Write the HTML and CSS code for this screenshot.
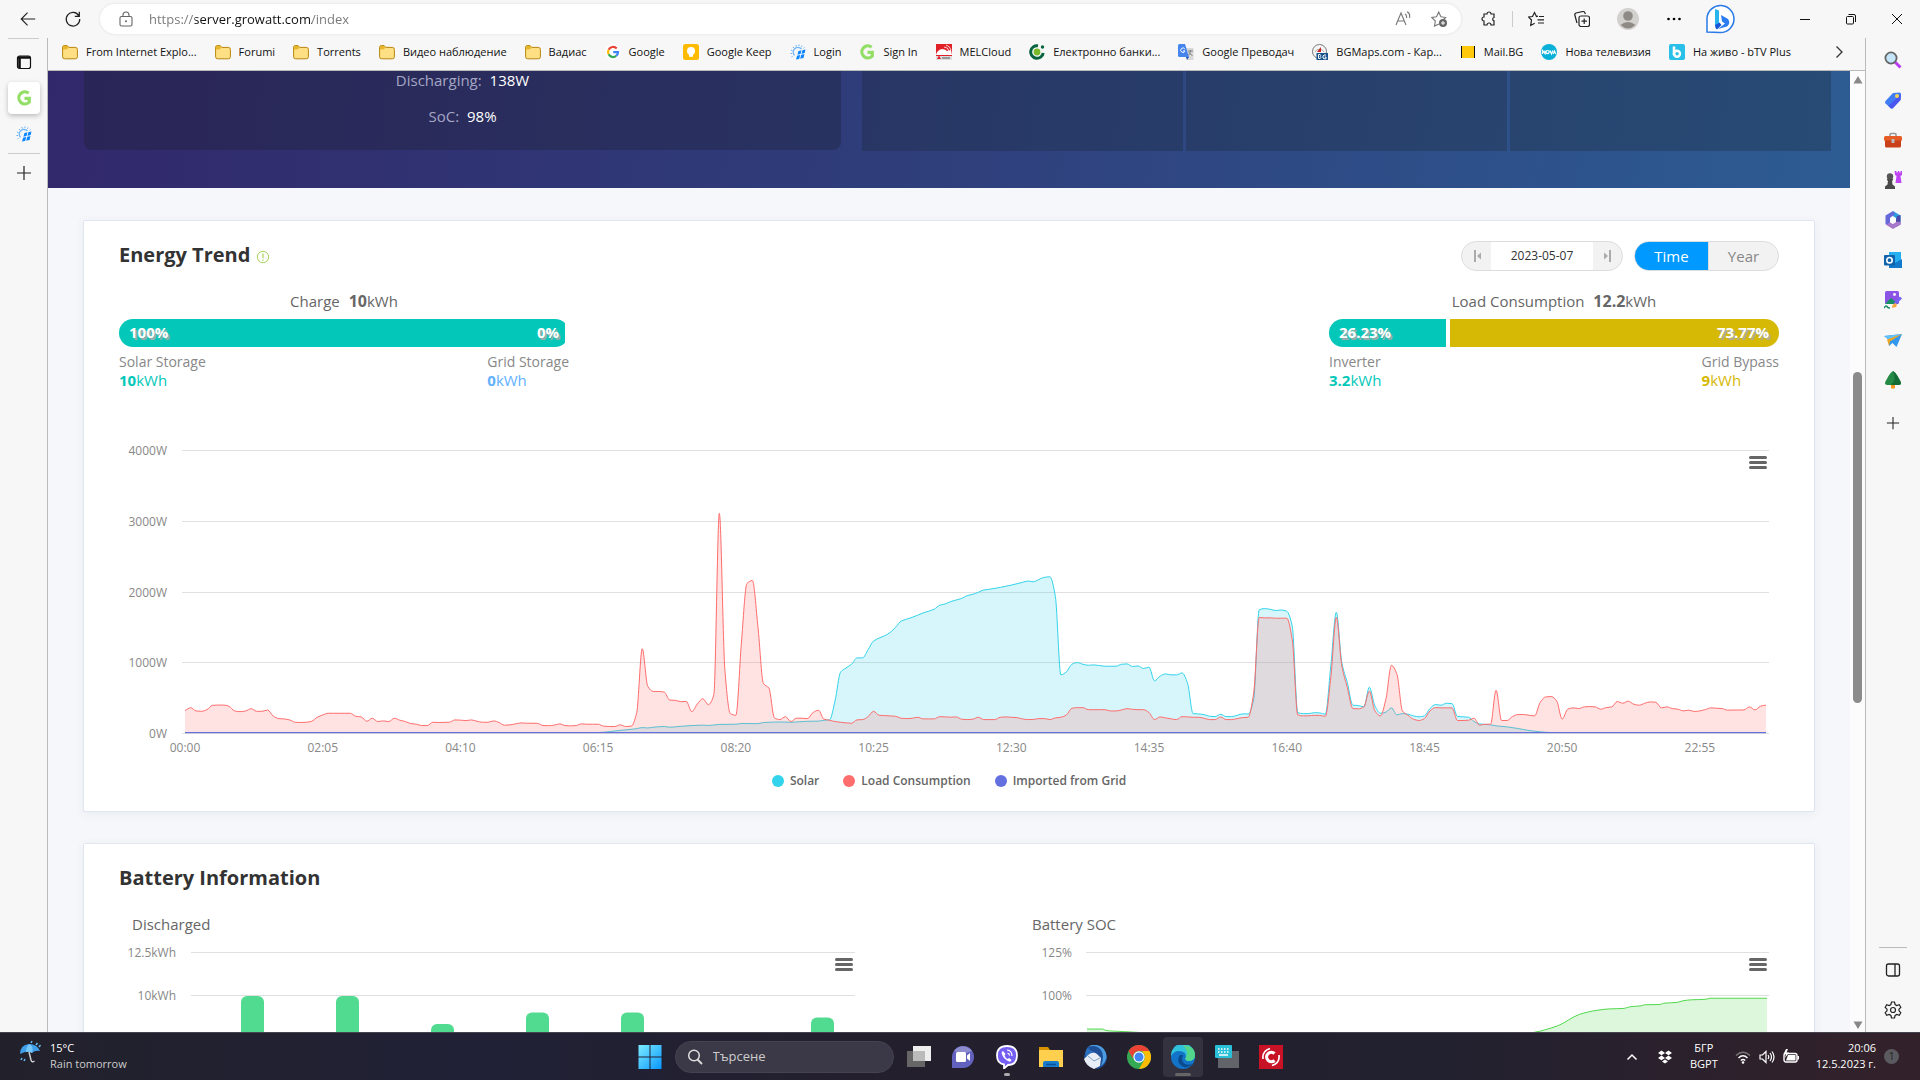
FILE: index.html
```html
<!DOCTYPE html>
<html lang="en">
<head>
    <meta charset="UTF-8">
    <meta name="viewport" content="width=device-width, initial-scale=1.0">
    <title>Growatt Energy Trend</title>
    <link rel="stylesheet" href="styles.css">
</head>
<body>
    <!-- Shared icons -->
    <svg class="sprite" aria-hidden="true">
        <symbol id="folder" viewBox="0 0 16 16">
            <path d="M.6 3.2q0-1.6 1.6-1.6h3l1.6 1.8h6.6q2 0 2 2v7.400q0 2-2 2H2.600q-2 0-2-2z" fill="#ffdf84" stroke="#b8860b"/>
            <path d="M1 5.500V3.200Q1 2 2.200 2H5l1.500 1.500L5 5.200z" fill="#e8b62c"/>
        </symbol>
        <symbol id="growatt" viewBox="0 0 16 16">
            <path d="M12.600 3.200A6 6 0 1 0 13.300 12V8.300H8.500" fill="none" stroke="#93de66" stroke-width="3.200"/>
        </symbol>
        <symbol id="panel" viewBox="0 0 16 16">
            <path d="M8.500 7l7-1.500L13.500 14l-7.500 1.500z" fill="#0a84ff"/>
            <path d="M9.500 15.500L12 6M7 11.200l8-1.700" stroke="#fff" stroke-width=".9"/>
            <path d="M4.500 11.500A4.500 4.500 0 0 1 11.500 5" fill="none" stroke="#6fb6fa" stroke-width="1.300"/>
            <path d="M1.500 13l1-.5M.5 9.500H2M1 6l1.500.7M3 3l1 1.200M5.800 1l.6 1.500M9 .5V2M12 1.500l-.7 1.300M14.500 3.500l-1 .8" stroke="#64aef5"/>
        </symbol>
        <symbol id="plus" viewBox="0 0 16 16">
            <path d="M8 1v14M1 8h14" stroke="#222" stroke-width="1.200"/>
        </symbol>
    </svg>

    <!-- Browser toolbar -->
    <header class="toolbar">
        <button class="nav-button" aria-label="Back"><svg viewBox="0 0 20 20"><path d="M18 10H2.500M9.500 3L2.500 10l7 7" fill="none" stroke="#222" stroke-width="1.300"/></svg></button>
        <button class="nav-button" aria-label="Refresh"><svg viewBox="0 0 20 20"><path d="M16.500 6.500A7.500 7.500 0 1 0 17.500 10M17 2v5h-5" fill="none" stroke="#222" stroke-width="1.400"/></svg></button>
        <div class="address-bar">
            <svg class="lock" viewBox="0 0 16 16"><rect x="2" y="5.500" width="12" height="9.500" rx="1.500" fill="none" stroke="#666" stroke-width="1.100"/><path d="M5 5.500V4a3 3 0 0 1 6 0v1.500" fill="none" stroke="#666" stroke-width="1.100"/><circle cx="8" cy="10.200" r="1" fill="#666"/></svg>
            <input class="address-input" type="text" aria-label="Address" value="https://server.growatt.com/index">
            <svg class="address-icon" viewBox="0 0 16 16"><path d="M1 14L6 2l5 12M2.500 10h7M10 3q2 1 1.500 4M12 .8q3.500 1.500 2.500 6" fill="none" stroke="#777" stroke-width="1.100"/></svg>
            <svg class="address-icon" viewBox="0 0 16 16"><path d="M8 13l-4.500 2 .8-5L.8 6.500l4.700-.8L7.700 1l2.200 4.700 4.700.8-2 2" fill="none" stroke="#777" stroke-width="1.100"/><circle cx="12" cy="12" r="4" fill="#666"/><path d="M12 10v4M10 12h4" stroke="#fff"/></svg>
        </div>
        <button class="tool-button" aria-label="Extensions"><svg viewBox="0 0 16 16"><path d="M3 3h3a2 2 0 0 1 4 0h3v3.500a1.700 1.700 0 0 0 0 3.300V14h-3a2 2 0 0 0-4 0H3v-4a2 2 0 0 1 0-4z" fill="none" stroke="#222" stroke-width="1.200"/></svg></button>
        <span class="tool-divider"></span>
        <button class="tool-button" aria-label="Favorites"><svg viewBox="0 0 16 16"><path d="M10 5.200L8.500 5.500 6.500 1.500 4.500 5.500.5 6l3 3-.8 5.500 4-2.200M11 5.500h5M9.500 8.800H16M10 12h6" fill="none" stroke="#222" stroke-width="1.200"/></svg></button>
        <button class="tool-button" aria-label="Collections"><svg viewBox="0 0 16 16"><rect x="5" y="5" width="10.500" height="10.500" rx="2" fill="none" stroke="#222" stroke-width="1.200"/><path d="M10.200 7.500v5.500M7.500 10.200H13M3 12L.8 4Q.5 2.500 2 2l7-1.500q1.500-.2 2 1.500l.4 1" fill="none" stroke="#222" stroke-width="1.200"/></svg></button>
        <button class="tool-button profile" aria-label="Profile"><svg viewBox="0 0 22 22"><circle cx="11" cy="11" r="11" fill="#d3d1ce"/><circle cx="11" cy="8" r="4.800" fill="#8e8b87"/><path d="M3.500 17q7.500-6 15 0-7.500 7-15 0" fill="#8e8b87"/></svg></button>
        <button class="tool-button" aria-label="Settings and more"><svg viewBox="0 0 16 16"><circle cx="2.500" cy="8" r="1.300"/><circle cx="8" cy="8" r="1.300"/><circle cx="13.500" cy="8" r="1.300"/></svg></button>
        <button class="tool-button bing" aria-label="Bing"><svg viewBox="0 0 32 32"><path d="M3 29V15a13.500 13.500 0 1 1 13 14.500z" fill="#fff" stroke="#2979e8" stroke-width="1.500"/><path d="M11 6l4 1.500v13l-4 3z" fill="#28b4ec"/><path d="M11 22l4.500-2.500 2 2.500-4.500 4.500q-2-1-2-4.500" fill="#1756d8"/><path d="M17 12l7 4q3 4-1 7.500L14 26l7-5.500-3-2z" fill="#2a7cf0"/></svg></button>
        <div class="window-buttons">
            <button aria-label="Minimize"><svg viewBox="0 0 12 12"><path d="M1 6.500h10" stroke="#111"/></svg></button>
            <button aria-label="Restore"><svg viewBox="0 0 12 12"><rect x="1.500" y="3.500" width="7" height="7.500" rx="1" fill="none" stroke="#111"/><path d="M3.500 1.500H9q1.500 0 1.500 1.500v6" fill="none" stroke="#111"/></svg></button>
            <button aria-label="Close"><svg viewBox="0 0 12 12"><path d="M1 1l10 10M11 1L1 11" stroke="#111"/></svg></button>
        </div>
    </header>

    <div class="workspace">
        <!-- Vertical tabs -->
        <nav class="tab-rail">
            <button aria-label="Tab actions"><svg viewBox="0 0 16 16"><rect x="1.500" y="2" width="13" height="12.500" rx="2" fill="none" stroke="#111" stroke-width="1.200"/><path d="M2 3.500h12M3.500 3v11" stroke="#111" stroke-width="2.600"/></svg></button>
            <button class="active" aria-label="Growatt"><svg><use href="#growatt"/></svg></button>
            <button aria-label="Login"><svg><use href="#panel"/></svg></button>
            <hr>
            <button aria-label="New tab"><svg><use href="#plus"/></svg></button>
        </nav>

        <div class="browser">
            <nav class="bookmarks">
                <a href="#"><svg><use href="#folder"/></svg>From Internet Explo...</a>
                <a href="#"><svg><use href="#folder"/></svg>Forumi</a>
                <a href="#"><svg><use href="#folder"/></svg>Torrents</a>
                <a href="#"><svg><use href="#folder"/></svg>Видео наблюдение</a>
                <a href="#"><svg><use href="#folder"/></svg>Вадиас</a>
                <a href="#"><svg viewBox="0 0 16 16"><circle cx="8" cy="8" r="8" fill="#fff"/><g fill="none" stroke-width="2.200"><path d="M11.700 4.500A5 5 0 0 0 3.600 5.700" stroke="#ea4335"/><path d="M3.600 5.700a5 5 0 0 0 0 4.600" stroke="#fbbc05"/><path d="M3.600 10.300a5 5 0 0 0 7.600 1.600" stroke="#34a853"/><path d="M11.200 11.900A5 5 0 0 0 13 8.200H8.200" stroke="#4285f4"/></g></svg>Google</a>
                <a href="#"><svg viewBox="0 0 16 16"><rect width="16" height="16" rx="2.500" fill="#fb0"/><circle cx="8" cy="7" r="4" fill="#fff"/><path d="M6 9h4v3.800H6z" fill="#fff"/></svg>Google Keep</a>
                <a href="#"><svg><use href="#panel"/></svg>Login</a>
                <a href="#"><svg><use href="#growatt"/></svg>Sign In</a>
                <a href="#"><svg viewBox="0 0 16 16"><path d="M0 0h16v16H0z" fill="#e01f26"/><path d="M0 11q1-5 6-6 3 0 5 2l4-1 1 5z" fill="#fff"/><path d="M0 12h16v4H0z" fill="#ddd"/><path d="M1 15l2-3.500L5 15z" fill="#e01f26"/><path d="M6 14h8" stroke="#999" stroke-width="2"/><path d="M8 3q4 0 5 4M10 1q4 1 5 5" fill="none" stroke="#fff" stroke-width=".8"/></svg>MELCloud</a>
                <a href="#"><svg viewBox="0 0 16 16"><path d="M9 1.800A6.300 6.300 0 1 0 14.200 9" fill="none" stroke="#07643e" stroke-width="3"/><circle cx="8" cy="8" r="3.400" fill="#7ab929"/><circle cx="13.500" cy="3" r="1.700" fill="#07643e"/></svg>Електронно банки...</a>
                <a href="#"><svg viewBox="0 0 16 16"><path d="M7 4h8.500v12H9z" fill="#d7d9db"/><path d="M1.500 0H7l4 13H1.500Q0 13 0 11.500v-10Q0 0 1.500 0" fill="#4684ee"/><path d="M6.800 5A2.200 2.200 0 1 0 7 7H5" fill="none" stroke="#fff"/><path d="M8 13h3l-2 3" fill="#2554b5"/><path d="M10 7h5M12.500 6v1q0 3-2.500 4.500M11 8.500q1 2 3.500 3" fill="none" stroke="#777" stroke-width=".9"/></svg>Google Преводач</a>
                <a href="#"><svg viewBox="0 0 16 16"><circle cx="7.500" cy="7.500" r="7" fill="#f6f6f6" stroke="#777"/><path d="M3 8a5 5 0 0 1 9 0" fill="none" stroke="#aaa"/><path d="M5 8h4V3z" fill="#c22"/><path d="M4.500 9H16v7H4.500z" fill="#17528f"/><path d="M6.500 10.500v4h1.700l.7-1-.7-1 .5-1-.6-1zM14 11h-2l-1 1v2l1 .8h2V13h-1.300" fill="none" stroke="#fff"/></svg>BGMaps.com - Кар...</a>
                <a href="#"><svg viewBox="0 0 16 16"><path d="M1 2h14v12H1z" fill="#ffc80a"/><path d="M1.500 2v12M14.500 2v12" stroke="#111"/></svg>Mail.BG</a>
                <a href="#"><svg viewBox="0 0 16 16"><circle cx="8" cy="8" r="8" fill="#09b1d9"/><path d="M1.500 10V6.500L4 9.500V6.500M6.500 6.500a1.600 1.600 0 1 0 .1 0M9 6.500L10.500 10 12 6.500M12.300 10l1.200-3 1.300 3" fill="none" stroke="#fff" stroke-width="1.200"/></svg>Нова телевизия</a>
                <a href="#"><svg viewBox="0 0 16 16"><rect width="16" height="16" rx="2" fill="#28bfe8"/><path d="M5 2.500v8.700" stroke="#fff" stroke-width="2.600"/><circle cx="8" cy="9.700" r="3" fill="none" stroke="#fff" stroke-width="2.400"/></svg>На живо - bTV Plus</a>
                <button class="more" aria-label="More favorites"><svg viewBox="0 0 16 16"><path d="M5.500 2.500L11 8l-5.500 5.500" fill="none" stroke="#333" stroke-width="1.300"/></svg></button>
            </nav>

            <div class="viewport">
                <main class="page">
                    <section class="hero">
                        <div class="status-panel">
                            <p><span>Discharging:</span> 138W</p>
                            <p><span>SoC:</span> 98%</p>
                        </div>
                        <div class="tiles"><div></div><div></div><div></div></div>
                    </section>

                    <!-- Energy trend card -->
                    <section class="card">
                        <div class="card-head">
                            <h2>Energy Trend <svg viewBox="0 0 14 14"><circle cx="7" cy="7" r="5.700" fill="none" stroke="#a9d35c"/><path d="M7 3.500v4.700M7 9.400v1.300" stroke="#a9d35c" stroke-width="1.200"/></svg></h2>
                            <div class="controls">
                                <div class="date-picker">
                                    <button aria-label="Previous day"><svg viewBox="0 0 8 12"><path d="M2 0v12" stroke="#aaa" stroke-width="2"/><path d="M8 2.500v7L4 6z" fill="#aaa"/></svg></button>
                                    <input type="text" aria-label="Date" value="2023-05-07">
                                    <button aria-label="Next day"><svg viewBox="0 0 8 12"><path d="M6 0v12" stroke="#aaa" stroke-width="2"/><path d="M0 2.500v7L4 6z" fill="#aaa"/></svg></button>
                                </div>
                                <div class="range-switch">
                                    <button class="selected">Time</button>
                                    <button>Year</button>
                                </div>
                            </div>
                        </div>

                        <div class="stats">
                            <div class="stat">
                                <p class="stat-title">Charge <span><b>10</b>kWh</span></p>
                                <div class="stat-bar">
                                    <div class="segment teal" style="width: 100%">100%</div>
                                    <div class="segment empty"><span>0%</span></div>
                                </div>
                                <div class="stat-labels">
                                    <p>Solar Storage<br><span class="teal-text"><b>10</b>kWh</span></p>
                                    <p>Grid Storage<br><span class="blue-text"><b>0</b>kWh</span></p>
                                </div>
                            </div>
                            <div class="stat">
                                <p class="stat-title">Load Consumption <span><b>12.2</b>kWh</span></p>
                                <div class="stat-bar">
                                    <div class="segment teal" style="width: 26.23%">26.23%</div>
                                    <div class="segment gold" style="width: 73.77%">73.77%</div>
                                </div>
                                <div class="stat-labels">
                                    <p>Inverter<br><span class="teal-text"><b>3.2</b>kWh</span></p>
                                    <p>Grid Bypass<br><span class="gold-text"><b>9</b>kWh</span></p>
                                </div>
                            </div>
                        </div>

                        <div class="chart">
                            <svg id="energy-chart" class="energy-chart"></svg>
                            <button class="chart-menu" aria-label="Chart menu"><i></i><i></i><i></i></button>
                        </div>
                        <ul class="legend">
                            <li class="solar">Solar</li>
                            <li class="load">Load Consumption</li>
                            <li class="grid">Imported from Grid</li>
                        </ul>
                    </section>

                    <!-- Battery card -->
                    <section class="card battery">
                        <h2>Battery Information</h2>
                        <div class="battery-charts">
                            <div class="battery-chart">
                                <h3>Discharged</h3>
                                <div class="chart">
                                    <svg id="discharge-chart" class="small-chart"></svg>
                                    <button class="chart-menu" aria-label="Chart menu"><i></i><i></i><i></i></button>
                                </div>
                            </div>
                            <div class="battery-chart">
                                <h3>Battery SOC</h3>
                                <div class="chart">
                                    <svg id="soc-chart" class="small-chart"></svg>
                                    <button class="chart-menu" aria-label="Chart menu"><i></i><i></i><i></i></button>
                                </div>
                            </div>
                        </div>
                    </section>
                </main>

                <div class="scrollbar">
                    <svg viewBox="0 0 10 8"><path d="M5 0l4.500 7.500H.5z" fill="#888"/></svg>
                    <span class="before"></span><span class="thumb"></span><span class="after"></span>
                    <svg viewBox="0 0 10 8"><path d="M5 8L.5.500h9z" fill="#888"/></svg>
                </div>
            </div>
        </div>

        <!-- Edge sidebar -->
        <aside class="side-rail">
            <button aria-label="Search"><svg viewBox="0 0 18 18"><path d="M11 11l5.500 5.500" stroke="#b93cf0" stroke-width="3"/><circle cx="7" cy="7" r="5.600" fill="#c4e5fa" stroke="#666" stroke-width="1.800"/></svg></button>
            <button aria-label="Shopping"><svg viewBox="0 0 18 18"><path d="M9 2l6.500-.5q1.500 0 1.500 1.500l-.5 6L9 17q-1.200 1-2.500 0l-5-4.500q-1-1.200 0-2.500z" fill="#407df5"/><path d="M17 3l-.5 6L9 17q-1.200 1-2.500 0l-2-2z" fill="#4a56ee"/><circle cx="13" cy="5" r="2" fill="#f3d456"/></svg></button>
            <button aria-label="Tools"><svg viewBox="0 0 18 18"><path d="M6 6V3.500q0-1 1-1h4q1 0 1 1V6" fill="none" stroke="#999" stroke-width="1.600"/><rect y="5" width="18" height="5" rx="1.500" fill="#e75b25"/><path d="M1 9.500h16V15q0 1.500-1.500 1.500h-13Q1 16.500 1 15z" fill="#c9401a"/><path d="M7.500 8h3v4h-3z" fill="#bbb"/></svg></button>
            <button aria-label="Games"><svg viewBox="0 0 18 18"><path d="M10.500 0h2v1.500h1.300V0h1.600v1.500h1.200V0H18v4l-1.500 1 1 7h-6l1-7-1.500-1z" fill="#c044f5"/><circle cx="6" cy="5.500" r="3.200" fill="#555"/><path d="M3 8h6v1.500H8l.5 4 2.500 2V18H1v-2.500l2.500-2 .5-4H3z" fill="#4a4a4a"/></svg></button>
            <button aria-label="Microsoft 365"><svg viewBox="0 0 18 18"><path d="M9 0l7.500 4.500v6L12 8 9 5z" fill="#2d9fe0"/><path d="M9 0L1.500 4.500V13l4.500 2V7l5-4z" fill="#6568d8"/><path d="M13 5l3.500-1v9.500L12 16V9z" fill="#4949a9"/><path d="M16.500 11v2.500L9 18l-7.500-4.500L6 11.500l3 1.500 4-2.500z" fill="#a678cc"/><path d="M6.500 7L9 5.500 12 7l-.5 4L9 12.500 6.500 11z" fill="#fff"/></svg></button>
            <button aria-label="Outlook"><svg viewBox="0 0 18 18"><path d="M5 1h12v15H5z" fill="#25aff0"/><path d="M5 8l6 4 7-4v9H5z" fill="#1479cb"/><rect y="4" width="11" height="10.500" rx="1" fill="#0f62ab"/><circle cx="5.500" cy="9.200" r="2.700" fill="none" stroke="#fff" stroke-width="1.600"/></svg></button>
            <button aria-label="Image creator"><svg viewBox="0 0 18 18"><rect x="1" width="14" height="13" rx="1.500" fill="#8b54e4"/><circle cx="10.500" cy="3.500" r="1.400" fill="#fff"/><path d="M1 13l6-6 7 6z" fill="#168f61"/><path d="M17 6.500L10.500 13" stroke="#7563f5" stroke-width="3"/><path d="M11.500 12l-3 2-.5 3 4-1 1-2z" fill="#f6ac3d"/><path d="M0 17q2-3 3-1.500T6 17" fill="none" stroke="#168f61" stroke-width="1.500"/></svg></button>
            <button aria-label="Drop"><svg viewBox="0 0 18 18"><path d="M0 5l18-2-5.500 13-4-4L5 15V9z" fill="#3198ee"/><path d="M1 5l17-2L5 10z" fill="#62c2fa"/><path d="M3 8.500L18 3 6 10.500 5 15z" fill="#eda520"/></svg></button>
            <button aria-label="Tree"><svg viewBox="0 0 18 18"><path d="M7 12h4v5q-2 1.500-4 0z" fill="#f19923"/><path d="M9 0q2 1 4.500 5l3 5.500q1.500 3-1.500 3.500H3Q0 13.500 1.500 10.500l3-5.500Q7 1 9 0" fill="#258a45"/><path d="M9 0q2 1 4.500 5l3 5.500q1.500 3-1.500 3.500H7q6-5 2-14" fill="#156d35"/></svg></button>
            <button class="customize" aria-label="Customize"><svg><use href="#plus"/></svg></button>
            <span class="rail-space"></span>
            <hr>
            <button aria-label="Hide sidebar"><svg viewBox="0 0 18 18"><rect x="2.500" y="3" width="13" height="12" rx="2" fill="none" stroke="#222" stroke-width="1.300"/><path d="M11 3v12" stroke="#222" stroke-width="1.300"/></svg></button>
            <button aria-label="Settings"><svg viewBox="0 0 18 18"><path d="M7.500 1h3l.6 2.500 1.700 1 2.500-.8 1.500 2.600L15 8.200v1.600l1.800 1.900-1.500 2.600-2.500-.8-1.700 1-.6 2.500h-3l-.6-2.500-1.700-1-2.500.8-1.500-2.600L3 9.800V8.200L1.200 6.300l1.500-2.600 2.500.8 1.700-1z" fill="none" stroke="#222" stroke-width="1.200"/><circle cx="9" cy="9" r="2.500" fill="none" stroke="#222" stroke-width="1.200"/></svg></button>
        </aside>
    </div>

    <!-- Windows taskbar -->
    <footer class="taskbar">
        <div class="weather">
            <svg viewBox="0 0 24 24"><path d="M2 14Q2 5 11 4q8 0 11 7-5-1-8 2-4-3-12 1" fill="#409fe8"/><path d="M11 4q5 2 3 9-3-2-6-1 0-5 3-8" fill="#78c7f9"/><path d="M11 12l2 8q1 3 3.500 1" fill="none" stroke="#ccc" stroke-width="1.500"/><path d="M13 3l1-2M18 5l1.500-2M21 7l1.500-2M4 18l-1 2M7 19l-1 2" stroke="#68b9f5" stroke-width="1.500"/></svg>
            <div>15°C<br><span>Rain tomorrow</span></div>
        </div>
        <div class="apps">
            <button aria-label="Start"><svg viewBox="0 0 24 24"><defs><linearGradient id="win" x2="1" y2="1"><stop stop-color="#7cecff"/><stop offset="1" stop-color="#0997ff"/></linearGradient></defs><path d="M.500 0h11v11.500H.500zM12.500 0h11v11.500h-11zM.500 12.500h11V24H.500zM12.500 12.500h11V24h-11z" fill="url(#win)"/></svg></button>
            <label class="search"><svg viewBox="0 0 16 16"><circle cx="7" cy="6.500" r="5.300" fill="none" stroke="#ddd" stroke-width="1.500"/><path d="M10.500 10.500L15 15" stroke="#ddd" stroke-width="1.800"/></svg><input type="text" placeholder="Търсене" aria-label="Търсене"></label>
            <button aria-label="Task view"><svg viewBox="0 0 24 24"><path d="M0 6h18v16H0z" fill="#666"/><path d="M6 1h18v15H6z" fill="#eee"/><path d="M6 6h12v10H6z" fill="#bbb"/></svg></button>
            <button aria-label="Chat"><svg viewBox="0 0 24 24"><path d="M1 23V12A11 11 0 1 1 12 23z" fill="#6261bd"/><path d="M3 6a11 11 0 0 1 18 0L12 9z" fill="#8d8ccf"/><rect x="5" y="7" width="10" height="10" rx="1.500" fill="#fff"/><path d="M16 10.500L19 8v8l-3-2.500z" fill="#fff"/></svg></button>
            <button class="open" aria-label="Viber"><svg viewBox="0 0 24 24"><path d="M12 1q10 0 10 9.500T13 20l-4 3.500v-4Q2 18.500 2 10.500 2 1 12 1" fill="#7360f2" stroke="#fff" stroke-width="1.800"/><path d="M8 6q-2 1-1 3.500 2 5 7 7 2 .5 2.500-1.500l-2.500-2-1.500 1q-2-1-3-3.500l1-1.500z" fill="#fff"/><path d="M12 5q5 .5 5 6M12.500 8q2 .5 2 2.500" fill="none" stroke="#fff" stroke-width="1.200"/></svg></button>
            <button aria-label="File Explorer"><svg viewBox="0 0 24 24"><path d="M0 2h9l2 3H0z" fill="#d99300"/><path d="M0 5h24v17H0z" fill="#ffd04d"/><path d="M4 22v-4q0-2 2-2h12q2 0 2 2v4z" fill="#187bcb"/><path d="M7 19.500h10" stroke="#0b529c" stroke-width="1.500"/></svg></button>
            <button aria-label="Thunderbird"><svg viewBox="0 0 24 24"><path d="M5 2q7-4 13 0 6 5 6 11-1 8-9 11l-8-2Q1 16 1 11z" fill="#1f4f96"/><path d="M5 2q8-3 13 3 4 6 0 16 5-4 5.500-9Q23 2 14 0 8-1 5 2" fill="#4a9be0"/><path d="M3 12Q8 5 14 9l4 4-1 8-6 3Q3 21 1 14z" fill="#e8eef6"/><path d="M5 11l6 5 6-3" fill="none" stroke="#7da1ca"/><path d="M5 2q1 4 7 5-6 1-9 5-2-6 2-10" fill="#2b6fbd"/></svg></button>
            <button aria-label="Chrome"><svg viewBox="0 0 24 24"><circle cx="12" cy="12" r="12" fill="#34a853"/><path d="M1.600 6A12 12 0 0 1 22.400 6H12a6 6 0 0 0-5.200 9z" fill="#ea4335"/><path d="M22.400 6A12 12 0 0 1 12 24l5.200-9A6 6 0 0 0 17.200 9L15 6z" fill="#fbbc05"/><circle cx="12" cy="12" r="5.700" fill="#fff"/><circle cx="12" cy="12" r="4.500" fill="#4285f4"/></svg></button>
            <button class="current" aria-label="Edge"><svg viewBox="0 0 24 24"><circle cx="12" cy="12" r="12" fill="#1273c8"/><path d="M0 11A12 12 0 0 1 24 10q0 6-7 6-4-1-2-4 0-6-7-6-5 0-8 5" fill="#30c2db"/><path d="M12 0q12 1 12 10 0 6-7 6-4-1-2-4 3-5-3-12" fill="#54d68a"/><path d="M9 10q-5 8 4 12 5 1 9-3-8 2-10-2-2-3 0-7z" fill="#0c4a8e"/></svg></button>
            <button aria-label="Keyboard"><svg viewBox="0 0 24 24"><path d="M3 6h21v17H3z" fill="#616469"/><rect width="17" height="13" rx="1" fill="#2ac0d8"/><path d="M3 4h11M3 7h11" stroke="#fff" stroke-width="1.500" stroke-dasharray="1.500 1.500"/><path d="M4 10h9" stroke="#fff" stroke-width="1.500"/></svg></button>
            <button aria-label="CCleaner"><svg viewBox="0 0 24 24"><path d="M0 0h24v24H0z" fill="#c81326"/><path d="M15.500 8.500a4.700 4.700 0 1 0 0 7" fill="none" stroke="#fff" stroke-width="3.200"/><path d="M4 14Q3 6 11 3.500M20 10q1 8-7 10.500" fill="none" stroke="#fff" stroke-width="1.700"/></svg></button>
        </div>
        <div class="tray">
            <svg viewBox="0 0 16 16"><path d="M3.500 10.500L8 6l4.500 4.500" fill="none" stroke="#fff" stroke-width="1.500"/></svg>
            <svg viewBox="0 0 16 16"><path d="M4.500 1.500L8 4 4.500 6.300 1 4zM11.500 1.500L15 4l-3.500 2.300L8 4zM4.500 6.500L8 9l-3.500 2.300L1 9zM11.500 6.500L15 9l-3.500 2.300L8 9zM8 10.500l3 2-3 2-3-2z" fill="#fff"/></svg>
            <div class="language">БГР<br>BGPT</div>
            <div class="system">
                <svg viewBox="0 0 16 16"><path d="M1 6.500q7-6.500 14 0" fill="none" stroke="#777" stroke-width="1.300"/><path d="M3.500 9q4.500-4.500 9 0M5.800 11.500q2.200-2.200 4.400 0" fill="none" stroke="#fff" stroke-width="1.400"/><circle cx="8" cy="13.500" r="1.300" fill="#fff"/></svg>
                <svg viewBox="0 0 16 16"><path d="M1 6h2.500L7 2.500v11L3.500 10H1zM9 6q1.500 2 0 4M11 4q3 4 0 8M13 2.500q4 5.500 0 11" fill="none" stroke="#fff" stroke-width="1.200"/></svg>
                <svg viewBox="0 0 16 16"><rect x="1" y="4.500" width="13" height="8.500" rx="2" fill="none" stroke="#fff" stroke-width="1.400"/><path d="M5 6h7.500v5.500H3zM14.500 7H16v3.500h-1.500M3 0L.5 5H3L2 9l4-5.500H3.500L5 0z" fill="#fff"/></svg>
            </div>
            <div class="clock">20:06<br>12.5.2023 г.</div>
            <span class="count">1</span>
        </div>
    </footer>

    <script>
        // Load consumption in watts, one reading every 5 minutes
        const load = [316,354,307,302,326,387,391,391,373,307,297,307,340,302,302,321,236,198,193,179,146,142,146,160,217,250,274,274,274,274,274,231,222,160,203,156,165,156,203,175,156,127,118,99,99,146,142,144,146,179,176,170,179,160,146,146,165,142,104,109,123,137,132,132,130,99,97,104,123,99,94,99,123,118,118,118,90,85,85,109,85,90,
            283,1193,660,585,585,575,462,458,439,443,297,406,481,396,538,3124,897,269,245,1274,2120,2165,1510,698,632,208,184,226,156,205,203,198,284,317,189,175,156,146,137,132,180,184,226,302,245,241,236,231,203,198,203,217,194,194,194,226,222,218,222,189,184,189,217,184,184,184,217,222,217,212,194,184,186,198,198,184,208,217,250,345,354,354,325,325,325,325,307,307,321,340,330,325,325,284,184,222,208,194,184,226,222,217,217,203,184,184,222,184,184,198,212,217,
            566,1638,1633,1633,1628,1628,1628,1320,250,236,238,245,243,231,780,1640,948,640,341,337,365,588,308,237,474,957,830,308,246,190,171,199,308,355,351,351,351,171,171,175,204,104,118,118,602,171,171,228,256,256,246,237,427,507,512,450,190,332,351,341,365,370,365,332,355,365,441,417,446,403,389,417,436,431,351,365,341,332,308,318,299,308,327,351,346,341,318,320,320,322,365,322,374,389];

        // Solar production as [reading, watts]
        const solar = [[0,0],[75,0],[77,12],[79,30],[81,45],[82,55],[83,70],[84,65],[85,75],[87,85],[88,75],[90,88],[94,105],[95,100],[97,115],[100,118],[101,128],[104,126],[105,142],[108,150],[110,146],[113,160],[115,162],[116,175],[117,180],[118,449],[119,859],[120,920],[121,972],[122,1063],[123,1063],[124,1180],[125,1303],[126,1345],[127,1378],[128,1425],[129,1500],[130,1586],[131,1615],[132,1640],[133,1671],[134,1704],[135,1728],[136,1756],[137,1813],[138,1832],[139,1865],[140,1888],[141,1910],[142,1950],[143,1968],[144,1997],[145,2030],[146,2040],[148,2067],[150,2100],[152,2138],[153,2157],[154,2148],[155,2180],[156,2210],[157,2218],[158,1935],[159,821],[160,864],[161,972],[162,996],[163,972],[164,958],[165,963],[167,944],[169,944],[170,972],[171,977],[172,940],[173,948],[174,911],[175,930],[176,736],[177,802],[178,835],[179,821],[180,821],[181,849],[182,700],[183,269],[184,265],[185,255],[186,231],[187,226],[188,260],[189,226],[190,226],[191,245],[192,265],[193,265],[194,472],[195,1748],[196,1765],[197,1755],[198,1737],[199,1745],[200,1727],[201,1514],[202,283],[203,269],[204,269],[205,283],[206,279],[207,260],[208,950],[209,1712],[210,995],[211,711],[212,389],[213,384],[214,365],[215,645],[216,379],[217,275],[218,289],[219,351],[220,251],[221,270],[222,261],[223,237],[224,223],[225,237],[226,341],[227,398],[228,389],[229,417],[230,412],[231,228],[232,223],[233,218],[234,156],[235,123],[237,109],[238,95],[240,80],[242,57],[244,28],[246,10],[248,0],[287,0]];

        // State of charge as [share of the axis, percent]
        const soc = [[0,80.500],[.022,80.500],[.03,79.500],[.055,79],[.1,78],[.6,70],[.65,78],[.667,79.300],[.673,80],[.693,82.500],[.724,89],[.750,91.400],[.768,92.200],[.790,92.500],[.799,93.500],[.815,94],[.82,94.600],[.843,94.800],[.848,95.500],[.868,96],[.876,96.900],[.889,97.500],[.91,97.800],[.917,98.400],[1,98.400]];

        function draw(svg, tag, attrs, text) {
            const el = document.createElementNS('http://www.w3.org/2000/svg', tag);
            for (const name in attrs) el.setAttribute(name, attrs[name]);
            if (text) el.textContent = text;
            svg.appendChild(el);
        }

        // Smooth curve that never overshoots its points
        function curve(pts) {
            const slope = pts.map((p, i) => {
                if (i === 0 || i === pts.length - 1) return 0;
                const a = (p[1] - pts[i - 1][1]) / (p[0] - pts[i - 1][0]);
                const b = (pts[i + 1][1] - p[1]) / (pts[i + 1][0] - p[0]);
                return a * b <= 0 ? 0 : 2 * a * b / (a + b);
            });
            let d = 'M' + pts[0];
            for (let i = 1; i < pts.length; i++) {
                const h = (pts[i][0] - pts[i - 1][0]) / 3;
                d += 'C' + [pts[i - 1][0] + h, pts[i - 1][1] + slope[i - 1] * h, pts[i][0] - h, pts[i][1] - slope[i] * h, pts[i][0], pts[i][1]].map(n => n.toFixed(2));
            }
            return d;
        }

        function area(svg, pts, base, name) {
            const d = curve(pts);
            draw(svg, 'path', { class: 'area ' + name, d: d + 'L' + pts[pts.length - 1][0] + ',' + base + 'L' + pts[0][0] + ',' + base + 'Z' });
            draw(svg, 'path', { class: 'line ' + name, d: d });
        }

        function gridLine(svg, y, left, right, label, labelX) {
            draw(svg, 'line', { class: 'grid-line', x1: left, x2: right, y1: y, y2: y });
            draw(svg, 'text', { class: 'y-label', x: labelX, y: y + 4 }, label);
        }

        function drawEnergy() {
            const svg = document.getElementById('energy-chart');
            const right = svg.clientWidth - 10, left = 63, base = 303.5;
            const step = (right - left - 6) / 287;
            const point = (i, w) => [left + 3 + i * step, base - 1 - w * .0702];
            svg.innerHTML = '';
            [4000, 3000, 2000, 1000, 0].forEach((w, i) => gridLine(svg, 20.5 + Math.round(i * 70.8), left, right, w + 'W', 48));
            area(svg, solar.map(p => point(p[0], p[1])), base, 'solar');
            area(svg, load.map((w, i) => point(i, w)), base, 'load');
            area(svg, [point(0, 0), point(287, 0)], base, 'grid');
            for (let i = 0; i < 287; i += 25) {
                const m = i * 5;
                const time = String(Math.floor(m / 60)).padStart(2, '0') + ':' + String(m % 60).padStart(2, '0');
                draw(svg, 'text', { class: 'x-label', x: point(i, 0)[0], y: 322 }, time);
            }
        }

        function drawDischarge() {
            const svg = document.getElementById('discharge-chart');
            const left = 72, right = svg.clientWidth;
            svg.innerHTML = '';
            ['12.5kWh', '10kWh'].forEach((t, i) => gridLine(svg, 13.5 + i * 43, left, right, t, 57));
            [10, 10, 8.300, 9, 9, 5, 8.700].forEach((v, i) => {
                const slot = (right - left) / 7;
                draw(svg, 'rect', { class: 'bar', x: Math.round(left + slot * (i + .5) + 3), y: 57 + (10 - v) * 16.500, width: 23, height: 200, rx: 6 });
            });
        }

        function drawSoc() {
            const svg = document.getElementById('soc-chart');
            const left = 67, right = svg.clientWidth;
            svg.innerHTML = '';
            [125, 100].forEach((p, i) => gridLine(svg, 13.5 + i * 43, left, right, p + '%', 53));
            area(svg, soc.map(p => [left + 1 + p[0] * (right - left - 3), 56.5 + (100 - p[1]) * 1.72]), 230, 'soc');
        }

        function drawAll() {
            drawEnergy();
            drawDischarge();
            drawSoc();
        }

        drawAll();
        window.addEventListener('resize', drawAll);
    </script>
</body>
</html>
```
FILE: styles.css
```css
* {
    margin: 0;
    padding: 0;
    box-sizing: border-box;
}

html, body {
    height: 100%;
}

body {
    display: flex;
    flex-direction: column;
    overflow: hidden;
    background: #f7f7f7;
    color: #666;
    font-family: "Open Sans", "Noto Sans", sans-serif;
    font-size: 15px;
    line-height: 20px;
}

button, input {
    font: inherit;
    color: inherit;
    border: 0;
    background: none;
}

button {
    display: flex;
    align-items: center;
    justify-content: center;
    cursor: pointer;
}

a {
    color: inherit;
    text-decoration: none;
}

svg {
    flex: none;
    width: 16px;
    height: 16px;
}

.sprite {
    position: absolute;
    width: 0;
    height: 0;
}

/* Browser toolbar */
.toolbar {
    display: flex;
    align-items: center;
    height: 38px;
    padding-left: 5px;
}

.nav-button {
    width: 45px;
    height: 36px;
}

.nav-button svg {
    width: 18px;
    height: 18px;
}

.tool-button {
    width: 46px;
    height: 36px;
}

.tool-button.profile svg {
    width: 22px;
    height: 22px;
}

.tool-button.bing svg {
    width: 32px;
    height: 32px;
}

.tool-divider {
    width: 1px;
    height: 16px;
    background: #ccc;
}

.address-bar {
    flex: 1;
    display: flex;
    align-items: center;
    gap: 20px;
    height: 30px;
    margin: 0 5px;
    padding: 0 14px 0 18px;
    border-radius: 15px;
    background: #fff;
    box-shadow: 0 0 3px #ddd;
}

.address-input {
    flex: 1;
    margin-left: -5px;
    outline: 0;
    color: transparent;
    font-size: 13px;
    /* scheme and path are dimmed, the host is dark */
    background: linear-gradient(to right, #777 46px, #111 46px, #111 163px, #777 163px);
    -webkit-background-clip: text;
    background-clip: text;
}

.window-buttons {
    display: flex;
    margin-left: 39px;
}

.window-buttons button {
    width: 46px;
    height: 36px;
}

.window-buttons svg {
    width: 12px;
    height: 12px;
}

.workspace {
    flex: 1;
    display: flex;
    min-height: 0;
}

/* Left rail */
.tab-rail {
    width: 47px;
    display: flex;
    flex-direction: column;
    align-items: center;
    gap: 4px;
    padding-top: 8px;
    position: relative;
}

.tab-rail::before {
    content: "";
    position: absolute;
    top: 0;
    left: 8px;
    right: 8px;
    border-top: 1px solid #ccc;
}

.tab-rail button {
    width: 32px;
    height: 32px;
    border-radius: 4px;
}

.tab-rail .active {
    background: #fff;
    box-shadow: 0 2px 5px #bbb;
}

.tab-rail hr {
    width: 32px;
    margin: -1px 0;
    border: 0;
    border-top: 1px solid #ccc;
}

.browser {
    flex: 1;
    min-width: 0;
    display: flex;
    flex-direction: column;
    border: solid #bbb;
    border-width: 0 1px;
}

.bookmarks {
    display: flex;
    align-items: center;
    gap: 18px;
    height: 33px;
    padding: 0 18px 4px 14px;
    border-bottom: 1px solid #bbb;
    color: #111;
    font-size: 11px;
    white-space: nowrap;
}

.bookmarks a {
    display: flex;
    align-items: center;
    gap: 8px;
}

.bookmarks .more {
    margin-left: auto;
}

.viewport {
    flex: 1;
    display: flex;
    min-height: 0;
}

.page {
    flex: 1;
    min-width: 0;
    overflow: hidden;
    background: #f5f7fa;
}

/* Top band */
.hero {
    display: flex;
    gap: 21px;
    height: 117px;
    margin-bottom: 32px;
    padding: 0 19px 37px 36px;
    background: linear-gradient(97deg, #31286b, #2f3f7c 50%, #2d5c93);
}

.status-panel {
    flex: 757;
    height: 79px;
    border-radius: 0 0 8px 8px;
    background: rgba(25, 30, 40, .3);
    color: #fff;
    line-height: 18px;
    text-align: center;
}

.status-panel p {
    height: 36px;
}

.status-panel span {
    margin-right: 4px;
    color: #a5a6c4;
}

.tiles {
    flex: 969;
    display: flex;
    gap: 3px;
}

.tiles div {
    flex: 1;
    background: rgba(25, 40, 50, .3);
}

/* Cards */
.card {
    margin: 0 35px 31px;
    padding: 20px 35px;
    border: 1px solid #dfe6f2;
    border-radius: 2px;
    background: #fff;
    box-shadow: 0 2px 8px #e8ebf0;
}

h2 {
    height: 30px;
    color: #333;
    font-size: 20px;
    line-height: 28px;
}

h2 svg {
    width: 14px;
    height: 14px;
    vertical-align: -2px;
}

.card-head {
    display: flex;
    justify-content: space-between;
}

.controls {
    display: flex;
    gap: 11px;
}

.date-picker,
.range-switch {
    display: flex;
    height: 30px;
    border: 1px solid #ddd;
    border-radius: 15px;
    background: #f2f2f2;
    overflow: hidden;
}

.date-picker button {
    width: 29px;
}

.date-picker svg {
    width: 8px;
    height: 12px;
}

.date-picker input {
    width: 102px;
    background: #fff;
    color: #333;
    font-size: 12px;
    text-align: center;
}

.range-switch button {
    width: 70px;
    border-left: 1px solid #ddd;
    color: #888;
    line-height: 26px;
}

.range-switch .selected {
    width: 73px;
    border: 0;
    background: #0099ff;
    color: #fff;
}

/* Charge and consumption bars */
.stats {
    display: flex;
    justify-content: space-between;
    margin-top: 20px;
}

.stat {
    width: 450px;
}

.stat-title {
    margin-bottom: 8px;
    text-align: center;
}

.stat-title span {
    margin-left: 5px;
}

.stat-title b {
    font-size: 16px;
}

.stat-bar {
    display: flex;
    gap: 4px;
    height: 28px;
    border-radius: 14px;
    overflow: hidden;
}

.segment {
    padding: 0 10px;
    color: #fff;
    font-weight: bold;
    line-height: 26px;
    text-shadow: 2px 2px 1px #aaa;
}

.segment.empty {
    width: 0;
    padding: 0;
}

.segment.empty span {
    float: right;
    margin-right: 10px;
}

.teal {
    background: #03c8b9;
}

.gold {
    background: #d5b905;
    text-align: right;
}

.stat-labels {
    display: flex;
    justify-content: space-between;
    margin-top: 5px;
    color: #888;
    font-size: 14px;
    line-height: 19px;
}

.stat-labels span {
    font-size: 15px;
}

.teal-text {
    color: #03c8b9;
}

.blue-text {
    color: #62b1ff;
}

.gold-text {
    color: #d5b905;
}

/* Charts */
.chart {
    position: relative;
}

.chart svg {
    display: block;
    width: 100%;
}

.energy-chart {
    height: 334px;
    margin-top: 40px;
}

.small-chart {
    height: 240px;
}

.chart-menu {
    position: absolute;
    top: 26px;
    right: 12px;
    flex-direction: column;
    gap: 2px;
}

.battery .chart-menu {
    top: 19px;
    right: 2px;
}

.chart-menu i {
    width: 18px;
    height: 3px;
    border-radius: 2px;
    background: #666;
}

.grid-line {
    stroke: #e0e0e0;
}

.y-label,
.x-label {
    fill: #888;
    font-size: 12px;
}

.y-label {
    text-anchor: end;
}

.x-label {
    text-anchor: middle;
}

.line {
    fill: none;
}

.area {
    fill-opacity: .2;
}

.line.solar { stroke: #33d3eb; }
.area.solar { fill: #33d3eb; }
.line.load { stroke: #ff6d6d; }
.area.load { fill: #ff6d6d; }
.line.grid { stroke: #6570e0; }
.area.grid { fill: #6570e0; }
.line.soc { stroke: #51d84d; }
.area.soc { fill: #51d84d; }

.bar {
    fill: #50db91;
}

.legend {
    display: flex;
    justify-content: center;
    gap: 24px;
    margin-top: 7px;
    list-style: none;
    font-size: 12px;
    font-weight: 600;
}

.legend li {
    display: flex;
    align-items: center;
    gap: 6px;
}

.legend li::before {
    content: "";
    width: 12px;
    height: 12px;
    border-radius: 50%;
}

.legend .solar::before { background: #33d3eb; }
.legend .load::before { background: #ff6d6d; }
.legend .grid::before { background: #6570e0; }

/* Battery card */
.battery-charts {
    display: grid;
    grid-template-columns: 736fr 750fr;
    gap: 164px;
    margin-top: 20px;
    padding-right: 10px;
}

.battery-chart h3 {
    margin-bottom: 5px;
    padding-left: 13px;
    font-size: 15px;
    font-weight: normal;
}

/* Scrollbar */
.scrollbar {
    width: 15px;
    display: flex;
    flex-direction: column;
    align-items: center;
    padding: 5px 0 3px;
    background: #fcfcfc;
}

.scrollbar svg {
    width: 10px;
    height: 8px;
}

.before {
    flex: 288;
}

.thumb {
    flex: 331;
    width: 9px;
    border-radius: 5px;
    background: #8b8b8b;
}

.after {
    flex: 318;
}

/* Right rail */
.side-rail {
    width: 54px;
    display: flex;
    flex-direction: column;
    align-items: center;
    padding: 2px 0;
}

.side-rail button {
    width: 40px;
    height: 40px;
}

.side-rail svg {
    width: 18px;
    height: 18px;
}

.side-rail .customize {
    height: 46px;
}

.side-rail .customize svg {
    width: 14px;
    height: 14px;
}

.rail-space {
    flex: 1;
}

.side-rail hr {
    width: 28px;
    margin-bottom: 2px;
    border: 0;
    border-top: 1px solid #bbb;
}

/* Taskbar */
.taskbar {
    display: grid;
    grid-template-columns: 1fr auto 1fr;
    align-items: center;
    height: 48px;
    border-top: 1px solid #45434d;
    background: linear-gradient(to right, #22212b, #202136 25%, #241f2c 48%, #22212f 75%, #33212a);
    color: #fff;
    font-size: 11px;
    line-height: 16px;
}

.weather {
    display: flex;
    gap: 8px;
    padding: 0 0 2px 18px;
}

.weather svg {
    width: 24px;
    height: 24px;
}

.weather span {
    color: #ccc;
}

.apps {
    display: flex;
    align-items: center;
    gap: 4px;
}

.apps button {
    position: relative;
    width: 40px;
    height: 40px;
    border-radius: 4px;
}

.apps button svg {
    width: 24px;
    height: 24px;
}

.apps .current {
    background: #34323f;
}

.apps .open::after,
.apps .current::after {
    content: "";
    position: absolute;
    bottom: 1px;
    width: 6px;
    height: 3px;
    border-radius: 2px;
    background: #aaa;
}

.apps .current::after {
    width: 16px;
    background: #666;
}

.search {
    display: flex;
    align-items: center;
    gap: 10px;
    width: 219px;
    height: 32px;
    margin: 0 1px;
    padding-left: 11px;
    border: 1px solid #454350;
    border-radius: 16px;
    background: #3b3947;
}

.search input {
    width: 150px;
    padding-bottom: 2px;
    font-size: 13px;
}

.search input::placeholder {
    color: #ccc;
}

.tray {
    display: flex;
    align-items: center;
    justify-content: flex-end;
    gap: 17px;
    padding-right: 21px;
    text-align: right;
    white-space: nowrap;
}

.language,
.clock {
    padding-bottom: 2px;
}

.language {
    text-align: center;
}

.system {
    display: flex;
    gap: 8px;
}

.count {
    width: 15px;
    height: 15px;
    margin-left: -9px;
    border-radius: 50%;
    background: #5a5a60;
    font-size: 10px;
    line-height: 15px;
    text-align: center;
    color: #222;
}
```
